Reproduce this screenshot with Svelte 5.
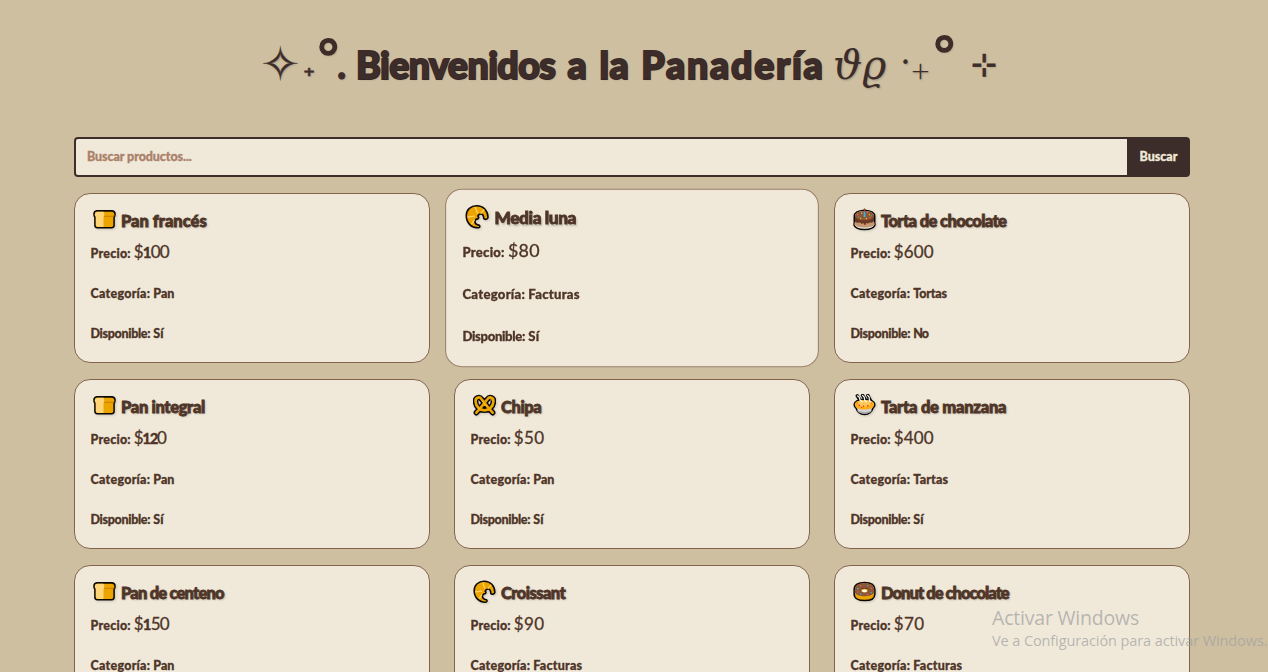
<script>
  const products = [
    { icon: 'bread', name: 'Pan francés', w: 86, price: '100', pw: 34.5, cat: 'Pan', cw: 21, ok: 'Sí', ow: 10.5 },
    { icon: 'croissant', name: 'Media luna', w: 78, price: '80', pw: 31, cat: 'Facturas', cw: 49, ok: 'Sí', ow: 10.5, active: true },
    { icon: 'cake', name: 'Torta de chocolate', w: 125, price: '600', pw: 40.5, cat: 'Tortas', cw: 34, ok: 'No', ow: 15 },
    { icon: 'bread', name: 'Pan integral', w: 84, price: '120', pw: 31.5, cat: 'Pan', cw: 21, ok: 'Sí', ow: 10.5 },
    { icon: 'pretzel', name: 'Chipa', w: 40, price: '50', pw: 31, cat: 'Pan', cw: 21, ok: 'Sí', ow: 10.5 },
    { icon: 'pie', name: 'Tarta de manzana', w: 125, price: '400', pw: 40.5, cat: 'Tartas', cw: 35, ok: 'Sí', ow: 10.5 },
    { icon: 'bread', name: 'Pan de centeno', w: 103, price: '150', pw: 34.5, cat: 'Pan', cw: 21, ok: 'Sí', ow: 10.5 },
    { icon: 'croissant', name: 'Croissant', w: 64, price: '90', pw: 31, cat: 'Facturas', cw: 49, ok: 'Sí', ow: 10.5 },
    { icon: 'donut', name: 'Donut de chocolate', w: 128, price: '70', pw: 31, cat: 'Facturas', cw: 49, ok: 'Sí', ow: 10.5 }
  ];

  // Tracks a label so that it fills the given width.
  function fit(node, width) {
    const natural = node.offsetWidth;
    const count = node.textContent.length;
    node.style.letterSpacing = `${(width - natural) / count}px`;
  }
</script>

{#snippet icon(kind)}
  <svg class="icon" viewBox="0 0 24 24" width="23" height="23">
    {#if kind === 'bread'}
      <path d="M4 3H20Q23 3.400 23 6.500Q23 8.500 22 9.500V18Q22 20.500 19.500 20.500H4.500Q2 20.500 2 18V9.500Q1 8.500 1 6.500Q1 3.400 4 3Z" fill="#eba400" stroke="#0b0804" stroke-width="1.600" />
      <path d="M4 4H11Q11.800 5 11.800 7L11 10V19.700H5Q3 19.500 3 17.500V9Q1.900 8 1.900 6.500Q2 4.500 4 4Z" fill="#ffd577" />
      <path d="M12 8H20.500Q22 7.500 22.200 6V8.500L20.500 9.500H11.500Z" fill="#ce8500" />
    {:else if kind === 'croissant'}
      <path d="M1.200 11C1.200 5 6 1.300 11.500 1.300C18.500 1.300 22.800 6.500 22.800 13C22.300 15 19.500 15.300 18.500 14C18.700 11.500 17.500 9.200 15.800 9.500C14.500 9.500 13 10.700 12.700 11.700C13.700 12.200 13.800 13.200 13 14C11.500 14.300 9.800 15.700 9.800 17C10 18.800 12 20.300 14 20.500C15.500 21.500 14.500 23 13 23.200C6 23.200 1.200 18 1.200 11Z" fill="#eba400" stroke="#0b0804" stroke-width="1.600" stroke-linejoin="round" />
      <path d="M10 2.500L12.500 9M2.200 12.500L9.500 11.500M6.500 19.500L9.500 15M19 5L15.500 9" stroke="#ffd166" stroke-width="1.300" fill="none" />
    {:else if kind === 'cake'}
      <ellipse cx="12" cy="17" rx="11" ry="5.500" fill="#fff" stroke="#0b0804" stroke-width="1.500" />
      <path d="M1.500 8V17Q3 20.500 12 20.500T22.500 17V8Z" fill="#c59871" />
      <path d="M1.500 8V13.500Q4 16.500 6 15Q7 16 8 15Q9 18 10 16Q11.500 16 12 17.500Q13 19 14 15.500Q16 17 17 15Q20 16.500 22.500 13V8Z" fill="#6b3923" />
      <path d="M1.300 15V8.500Q1.300 3 12 2.200Q22.700 3 22.700 8.500V15" fill="none" stroke="#0b0804" stroke-width="1.500" />
      <ellipse cx="12" cy="8" rx="10" ry="4.800" fill="#8d5637" />
      <g fill="#ffb83d"><circle cx="9" cy="5.500" r=".7" /><circle cx="17" cy="7" r=".7" /><circle cx="8" cy="11" r=".7" /><circle cx="14" cy="11" r=".7" /></g>
      <g fill="#e96073"><circle cx="5" cy="7" r=".7" /><circle cx="15" cy="5" r=".7" /><circle cx="18" cy="10" r=".7" /></g>
      <g fill="#3bc46b"><circle cx="6" cy="9.500" r=".7" /><circle cx="19" cy="8" r=".6" /></g>
      <path d="M12 3.500V9.500" stroke="#32b9e8" stroke-width="1.800" />
      <path d="M12 .5L13 2.300L12 3.700L11 2.300Z" fill="#f03a17" stroke="#501409" stroke-width=".4" />
    {:else if kind === 'pretzel'}
      <g fill="none" stroke-linecap="round" stroke-linejoin="round">
        <path d="M3.500 19.500L7.500 15L15 5.500C17.500 2 21.800 4 21.300 8C21 13 17 17 12 17C7 17 3 13 2.700 8C2.200 4 6.500 2 9 5.500L16.500 15L20.500 19.500" stroke="#0b0804" stroke-width="5.800" />
        <path d="M3.500 19.500L7.500 15L15 5.500C17.500 2 21.800 4 21.300 8C21 13 17 17 12 17C7 17 3 13 2.700 8C2.200 4 6.500 2 9 5.500L16.500 15L20.500 19.500" stroke="#eba400" stroke-width="2.800" />
        <path d="M9.500 7L14.500 13M5 14L7 15.500M18 5L20 7" stroke="#ffca55" stroke-width=".8" />
      </g>
    {:else if kind === 'pie'}
      <path d="M1.200 11C1.200 8 5 5.500 12 5.500S22.800 8 22.800 11C22.800 13 21.500 14 20.700 15C19.500 19.500 17 21.300 12 21.300S4.500 19.500 3.300 15C2.500 14 1.200 13 1.200 11Z" fill="#d6d6d8" stroke="#0b0804" stroke-width="1.600" />
      <path d="M4 17Q12 20.500 20 17L18.500 19Q12 21.500 5.500 19Z" fill="#aaaaac" />
      <path d="M4.500 2L7.500 6.500M10 1.500L13 6.500M15.500 1.500L18 6.500" fill="none" stroke="#0b0804" stroke-width="3.600" stroke-linecap="round" />
      <path d="M1.900 11C2 8 6 6.300 12 6.300S22 8 22.100 11C21.500 15.500 17 16.300 12 16.300S2.500 15.500 1.900 11Z" fill="#ffad19" />
      <ellipse cx="12" cy="10" rx="7.500" ry="3" fill="#ffc65a" />
      <path d="M6 11l1 1.500M11 12v1.500M16 11.500l-1 1.500M19 9v1M4.500 9v1M9 13.500v1" stroke="#dc4321" stroke-width="1.200" />
      <path d="M4.700 2Q7 3 7 5T9.500 8M10 1.500Q12.300 3 12 5T14 8M15.300 1.500Q17.500 3 17 5T18.500 8" fill="none" stroke="#fff" stroke-width="1.300" stroke-linecap="round" />
    {:else}
      <path d="M1.200 10C1.200 5 5.500 2.500 12 2.500S22.800 5 22.800 10V14.500C22.800 19 18.500 21.500 12 21.500S1.200 19 1.200 14.500Z" fill="#eba400" stroke="#0b0804" stroke-width="1.600" />
      <path d="M1.900 10C1.900 5.500 6 3.200 12 3.200S22.100 5.500 22.100 10V13Q20 17 12 17T1.900 13Z" fill="#8d5637" />
      <ellipse cx="12" cy="10.500" rx="4.200" ry="2.500" fill="#6b3923" />
      <ellipse cx="12" cy="11" rx="3.500" ry="2" fill="#f6b72b" />
      <ellipse cx="12" cy="11.500" rx="2.400" ry="1.300" fill="#fff" />
      <g fill="#32b9e8"><circle cx="5" cy="9" r=".8" /><circle cx="15.500" cy="6" r=".7" /><circle cx="8" cy="14.500" r=".8" /><circle cx="19" cy="13" r=".7" /></g>
      <g fill="#e96073"><circle cx="8" cy="6" r=".8" /><circle cx="19" cy="8.500" r=".8" /><circle cx="5" cy="12.500" r=".7" /><circle cx="15" cy="15" r=".8" /></g>
    {/if}
  </svg>
{/snippet}

<main>
  <h1>
    <span class="orn star">✧</span><span class="orn sub">₊</span><span class="orn ring">°</span><span class="orn dot">.</span>
    <span class="words"><span use:fit={199}>Bienvenidos</span><span use:fit={20}>a</span><span use:fit={30}>la</span><span use:fit={183}>Panadería</span></span>
    <span class="orn greek">ϑϱ</span><span class="orn mid">•</span><span class="orn thin">+</span><span class="orn ring wide">°</span><span class="orn cross">⊹</span>
  </h1>

  <form>
    <div class="field"><span use:fit={104.5}>Buscar productos...</span></div>
    <button type="button"><span use:fit={38}>Buscar</span></button>
  </form>

  <section>
    {#each products as p}
      <article class:active={p.active}>
        <h3>{@render icon(p.icon)}<span use:fit={p.w}>{p.name}</span></h3>
        <p><span class="key" use:fit={40.5}>Precio:</span><span class="num" use:fit={p.pw}>${#each p.price as d}<span class:heavy={d === '1' || d === '2'}>{d}</span>{/each}</span></p>
        <p><span class="key" use:fit={59.5}>Categoría:</span><span use:fit={p.cw}>{p.cat}</span></p>
        <p><span class="key" use:fit={59.5}>Disponible:</span><span use:fit={p.ow}>{p.ok}</span></p>
      </article>
    {/each}
  </section>
</main>

<aside>
  <div class="big"><span use:fit={147}>Activar Windows</span></div>
  <div class="small"><span use:fit={275}>Ve a Configuración para activar Windows.</span></div>
</aside>

<style>
  :global(body) { margin: 0; background: #cebfa1; overflow: hidden; }
  main { width: 1268px; height: 672px; padding: 0 78px 0 74px; box-sizing: border-box; overflow: hidden; font-family: Lato, sans-serif; color: #4f3528; }
  span { white-space: nowrap; }
  h1 {
    display: flex; align-items: flex-start; height: 137px; margin: 0; padding-left: 187px; box-sizing: border-box;
    color: #3d2d2a; font-size: 39px; font-weight: 900; line-height: 48px; text-shadow: 1px 1px 2px rgba(0, 0, 0, 0.2);
  }
  .words { display: flex; flex: none; gap: 12px; margin-top: 41px; width: 477px; font-size: 37.500px; -webkit-text-stroke: 2px #3d2d2a; stroke-linejoin: round; paint-order: stroke; }
  .orn { display: block; flex: none; font-family: "DejaVu Sans", sans-serif; font-weight: 400; }
  .star { width: 42px; margin-top: 40px; font-size: 46px; -webkit-text-stroke: 0.4px #3d2d2a; }
  .sub { width: 12px; margin-top: 44px; font-size: 23px; font-weight: 700; -webkit-text-stroke: 0.6px #3d2d2a; }
  .ring { width: 22px; margin-top: 36px; font-size: 53px; font-weight: 400; -webkit-text-stroke: 1.500px #3d2d2a; }
  .dot { width: 19px; margin-top: 40px; font-family: Lato, sans-serif; font-weight: 900; -webkit-text-stroke: 0.800px #3d2d2a; }
  .greek { width: 68px; margin-top: 41px; font-family: "DejaVu Serif", serif; font-size: 41px; font-style: italic; }
  .mid { width: 10px; margin-top: 39px; font-size: 15px; }
  .thin { width: 20px; margin-top: 47px; font-family: "Open Sans", sans-serif; font-size: 33px; font-weight: 300; }
  .wide { width: 40px; margin-top: 33px; }
  .cross { margin-top: 40px; font-size: 31px; -webkit-text-stroke: 0.800px #3d2d2a; }

  form { display: flex; height: 40px; margin: 0 0 16px; box-sizing: border-box; border: 2px solid #3d2d2a; border-radius: 4px; overflow: hidden; background: #3d2d2a; font-size: 12.500px; font-weight: 900; }
  .field { width: 1051px; padding-left: 11px; box-sizing: border-box; background: #f0e9da; color: #ab8169; line-height: 36px; -webkit-text-stroke: 0.3px #ab8169; }
  button { flex: 1; padding: 0 0 0 12.500px; border: 0; background: #3d2d2a; color: #f0e9da; font: inherit; text-align: left; line-height: 34px; -webkit-text-stroke: 0.3px #f0e9da; }

  section { display: grid; grid-template-columns: repeat(3, 356px); grid-auto-rows: 170px; gap: 16px 24px; }
  article { box-sizing: border-box; padding: 16px 15px; border: 1px solid #83654d; border-radius: 16px; background: #f0e9da; }
  .active { transform: scale(1.05); border: 1.500px solid #998068; padding: 15.500px 15px; }
  h3 { display: flex; gap: 5px; height: 22px; margin: 0 0 12px; padding-left: 3px; font-size: 16.500px; font-weight: 900; line-height: 23px; text-shadow: 1px 1px 2px rgba(0, 0, 0, 0.25); -webkit-text-stroke: 0.8px #4f3528; }
  .icon { flex: none; margin-top: -2px; -webkit-text-stroke: 0; filter: drop-shadow(1px 1px 1px rgba(0, 0, 0, 0.15)); }
  p { height: 20px; margin: 0 0 20px; padding-left: 0.5px; font-size: 12.500px; font-weight: 900; line-height: 20px; -webkit-text-stroke: 0.3px #4f3528; }
  .key { margin-right: 3px; }
  p > span, .field span, button span { display: inline-block; line-height: 0; }
  .num { font-size: 17px; font-weight: 400; }
  .heavy { font-size: 15px; font-weight: 900; }

  aside { position: absolute; left: 992px; top: 604px; width: 276px; overflow: hidden; color: rgba(160, 160, 160, 0.72); font-family: "Open Sans", "Noto Sans", sans-serif; pointer-events: none; }
  .big { font-size: 19.500px; line-height: 28px; }
  .small { font-size: 14.500px; line-height: 18px; }
  .big span, .small span { display: inline-block; }
</style>
